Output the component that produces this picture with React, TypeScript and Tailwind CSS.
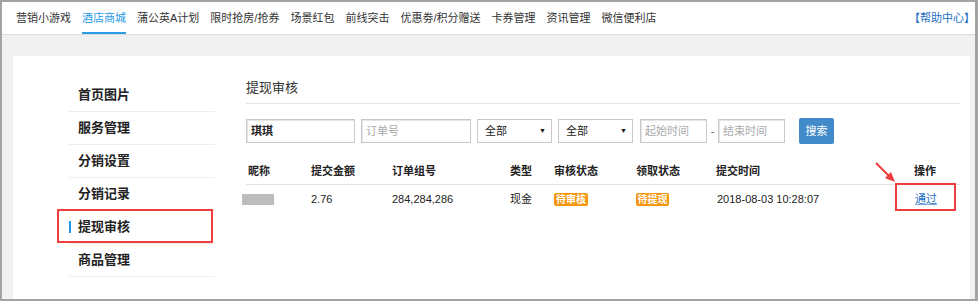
import React from "react";

const navItems = [
  "营销小游戏",
  "酒店商城",
  "蒲公英A计划",
  "限时抢房/抢券",
  "场景红包",
  "前线突击",
  "优惠劵/积分赠送",
  "卡券管理",
  "资讯管理",
  "微信便利店",
];

const sideItems = ["首页图片", "服务管理", "分销设置", "分销记录", "提现审核", "商品管理"];

const font = { fontFamily: '"Liberation Sans", "Noto Sans CJK SC", sans-serif' };

export default function App() {
  return (
    <div
      className="relative w-[978px] h-[301px] overflow-hidden border-l-2 border-t-2 border-r-[3px] border-b-2 border-[#a3a3a3] bg-[#f1f1f1] text-[#333]"
      style={font}
    >
      {/* top nav */}
      <div className="h-[33px] bg-white border-b border-[#dcdcdc] flex items-stretch pl-[14px] pr-0">
        <div className="flex items-stretch gap-[11px] text-[11px]">
          {navItems.map((n, i) => (
            <div
              key={n}
              className={
                i === 1
                  ? "flex items-center text-[#2a9be6] border-b-2 border-[#2a9be6] pt-[2px]"
                  : "flex items-center text-[#333] border-b-2 border-transparent pt-[2px]"
              }
            >
              {n}
            </div>
          ))}
        </div>
        <div className="ml-auto flex items-center text-[11px] text-[#1d6fc4] pt-[1px]">【帮助中心】</div>
      </div>

      {/* main */}
      <div className="pl-[11px] pt-[21px] pr-[5px]">
        <div className="w-[957px] h-[260px] bg-white flex">
          {/* sidebar */}
          <div className="ml-[56px] mt-[23px] w-[146px] flex flex-col">
            {sideItems.map((s) => (
              <div
                key={s}
                className="h-[33px] border-b border-[#eeeeee] flex items-center pl-[9px] relative text-[13px] font-bold text-[#222]"
              >
                {s === "提现审核" && (
                  <span className="absolute left-0 top-[10px] w-[2px] h-[12px] bg-[#2196e0]" />
                )}
                {s}
              </div>
            ))}
          </div>

          {/* content */}
          <div className="ml-[31px] mt-[17px] w-[714px] flex flex-col">
            <div className="h-[31px] flex items-center border-b border-[#e6e6e6] text-[13px] text-[#333]">
              提现审核
            </div>

            <div className="mt-[14px] flex items-center h-[26px] text-[11px]">
              <div className="w-[109px] h-[24px] border border-[#c8c8c8] shadow-[inset_1px_1px_1px_#e4e4e4] flex items-center pl-[4px] font-bold text-[#222]">
                琪琪
              </div>
              <div className="ml-[6px] w-[110px] h-[24px] border border-[#c8c8c8] shadow-[inset_1px_1px_1px_#e4e4e4] flex items-center pl-[4px] text-[#aaa]">
                订单号
              </div>
              <div className="ml-[6px] w-[75px] h-[24px] border border-[#c8c8c8] flex items-center pl-[7px] pr-[5px] text-[#222]">
                <span>全部</span>
                <span className="ml-auto text-[7px] text-[#111]">▼</span>
              </div>
              <div className="ml-[6px] w-[75px] h-[24px] border border-[#c8c8c8] flex items-center pl-[7px] pr-[5px] text-[#222]">
                <span>全部</span>
                <span className="ml-auto text-[7px] text-[#111]">▼</span>
              </div>
              <div className="ml-[7px] w-[67px] h-[24px] border border-[#c8c8c8] shadow-[inset_1px_1px_1px_#e4e4e4] flex items-center pl-[4px] text-[#aaa]">
                起始时间
              </div>
              <div className="w-[11px] text-center text-[#666]">-</div>
              <div className="w-[67px] h-[24px] border border-[#c8c8c8] shadow-[inset_1px_1px_1px_#e4e4e4] flex items-center pl-[4px] text-[#aaa]">
                结束时间
              </div>
              <div className="ml-[14px] w-[35px] h-[26px] rounded-[2px] bg-[#428bca] text-white flex items-center justify-center">
                搜索
              </div>
            </div>

            {/* table */}
            <div className="mt-[15px] text-[11px]">
              <div className="h-[26px] flex items-center border-b border-[#e2e2e2] font-bold text-[#222]">
                <div className="w-[63px] pl-[2px]">昵称</div>
                <div className="w-[81px] pl-[2px]">提交金额</div>
                <div className="w-[118px] pl-[2px]">订单组号</div>
                <div className="w-[44px] pl-[2px]">类型</div>
                <div className="w-[82px] pl-[2px]">审核状态</div>
                <div className="w-[80px] pl-[2px]">领取状态</div>
                <div className="w-[198px] pl-[2px]">提交时间</div>
                <div className="w-[48px] pl-[2px]">操作</div>
              </div>
              <div className="h-[28px] flex items-center text-[#222]">
                <div className="w-[63px]">
                  <div className="-ml-[4px] w-[32px] h-[11px] bg-[#bdbdbd]" />
                </div>
                <div className="w-[81px] pl-[2px]">2.76</div>
                <div className="w-[118px] pl-[2px]">284,284,286</div>
                <div className="w-[44px] pl-[2px]">现金</div>
                <div className="w-[82px] pl-[2px]">
                  <span className="inline-flex items-center justify-center w-[34px] h-[13px] rounded-[2px] bg-[#f5960f] text-white text-[10px] font-bold leading-none">
                    待审核
                  </span>
                </div>
                <div className="w-[80px] pl-[2px]">
                  <span className="inline-flex items-center justify-center w-[33px] h-[13px] rounded-[2px] bg-[#f5960f] text-white text-[10px] font-bold leading-none">
                    待提现
                  </span>
                </div>
                <div className="w-[198px] pl-[3px]">2018-08-03 10:28:07</div>
                <div className="w-[48px] pl-[3px] text-[#1d6fc4] underline decoration-[#7aa7d9]">通过</div>
              </div>
            </div>
          </div>
        </div>
      </div>

      {/* annotations */}
      <div className="absolute left-[55px] top-[207px] w-[156px] h-[34px] border-2 border-[#f03c3c]" />
      <div className="absolute left-[893px] top-[181px] w-[61px] h-[28px] border-2 border-[#f03c3c]" />
      <svg className="absolute left-[870px] top-[157px]" width="28" height="28" viewBox="0 0 28 28">
        <line x1="4" y1="4" x2="18" y2="18" stroke="#f03c3c" strokeWidth="2" />
        <polygon points="23,23 13,19 19,13" fill="#f03c3c" />
      </svg>
    </div>
  );
}
